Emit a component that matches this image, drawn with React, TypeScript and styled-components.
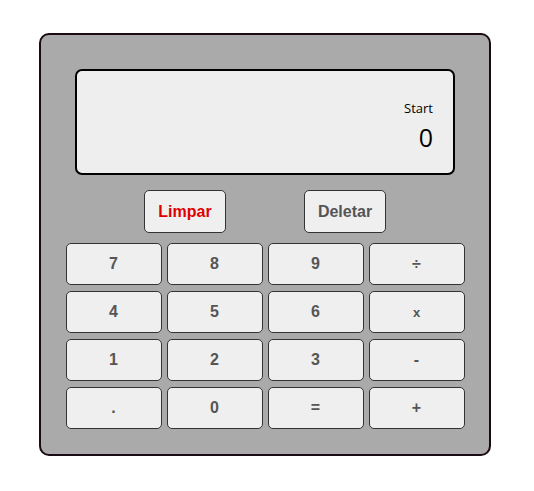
import React, { useState } from "react";
import styled, { createGlobalStyle } from "styled-components";

const GlobalStyle = createGlobalStyle`
  *, *::before, *::after {
    box-sizing: border-box;
  }
  body {
    margin: 0;
    background-color: #ffffff;
    font-family: "Liberation Sans", Arial, sans-serif;
  }
`;

const Page = styled.div`
  padding: 33px 0 0 39px;
`;

const Calculator = styled.div`
  width: 452px;
  height: 423px;
  background-color: #aaaaaa;
  border: 2px solid #1a0a14;
  border-radius: 10px;
  padding-top: 34px;
  display: flex;
  flex-direction: column;
  align-items: center;
`;

const Display = styled.div`
  width: 380px;
  height: 106px;
  background-color: #eeeeee;
  border: 2px solid #000000;
  border-radius: 7px;
  display: flex;
  flex-direction: column;
  justify-content: flex-end;
  align-items: flex-end;
  padding: 0 20px 21px 0;
  font-family: "Open Sans", "Noto Sans", sans-serif;
  color: #000000;
`;

const Previous = styled.div`
  font-size: 13px;
  line-height: 18px;
  margin-bottom: 5px;
`;

const Current = styled.div`
  font-size: 25px;
  line-height: 30px;
`;

const ActionRow = styled.div`
  display: flex;
  gap: 78px;
  margin-top: 15px;
`;

const Key = styled.button<{ $danger?: boolean }>`
  height: 42px;
  background-color: #efefef;
  border: 1px solid #333333;
  border-radius: 5px;
  font-family: "Liberation Sans", Arial, sans-serif;
  font-weight: bold;
  font-size: 16px;
  color: ${(p) => (p.$danger ? "#e00000" : "#555555")};
  padding: 0;
  cursor: pointer;
`;

const ActionKey = styled(Key)`
  width: 82px;
  height: 43px;
`;

const Pad = styled.div`
  display: grid;
  grid-template-columns: repeat(4, 96px);
  grid-auto-rows: 42px;
  column-gap: 5px;
  row-gap: 6px;
  margin-top: 10px;
`;

const PadKey = styled(Key)<{ $small?: boolean }>`
  font-size: ${(p) => (p.$small ? "13px" : "16px")};
`;

const keys = ["7", "8", "9", "÷", "4", "5", "6", "x", "1", "2", "3", "-", ".", "0", "=", "+"];

export default function App() {
  const [previous] = useState("Start");
  const [current] = useState("0");

  return (
    <Page>
      <GlobalStyle />
      <Calculator>
        <Display>
          <Previous>{previous}</Previous>
          <Current>{current}</Current>
        </Display>
        <ActionRow>
          <ActionKey $danger>Limpar</ActionKey>
          <ActionKey>Deletar</ActionKey>
        </ActionRow>
        <Pad>
          {keys.map((k) => (
            <PadKey key={k} $small={k === "x"}>
              {k}
            </PadKey>
          ))}
        </Pad>
      </Calculator>
    </Page>
  );
}
